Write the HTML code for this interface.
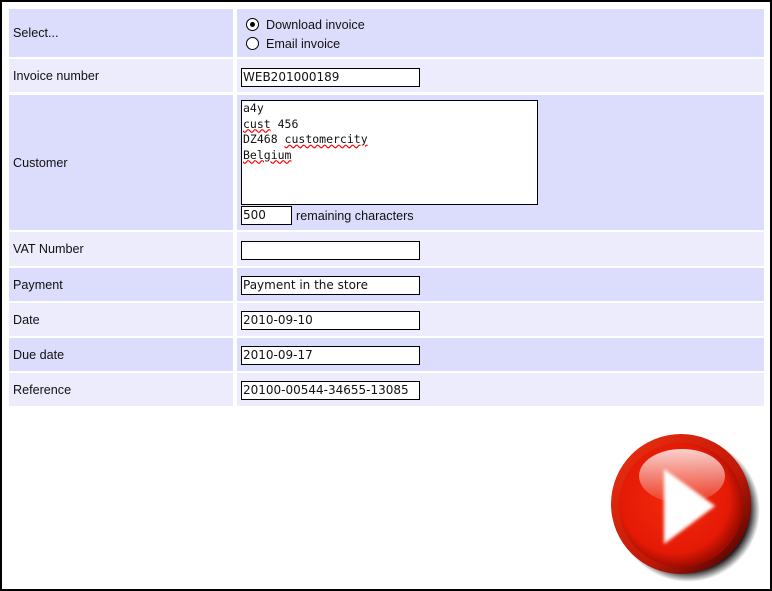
<!DOCTYPE html>
<html><head><meta charset="utf-8"><style>
html,body{margin:0;padding:0;background:#fff}
body{width:768px;height:587px;border:2px solid #000;position:relative;overflow:hidden;font-family:"Liberation Sans",sans-serif;font-size:12.6px;color:#111}
.r{position:absolute;left:7px;width:755px}
.l,.v{position:absolute;top:0;bottom:0}
.l{left:0;width:224px}
.v{left:228px;right:0}
.d .l,.d .v{background:#dcdcfc}
.e .l,.e .v{background:#ececfc}
.lt{position:absolute;left:4px;top:50%;transform:translateY(-50%)}
.in{position:absolute;left:4px;width:176px;height:17px;border:1px solid #000;background:#fff;font-family:"DejaVu Sans",sans-serif;font-size:12px;line-height:17px;padding-left:1px;box-sizing:content-box;white-space:nowrap;overflow:hidden}
.rad{position:absolute;left:9px;width:11px;height:11px;border:1px solid #000;border-radius:50%;background:#fff}
</style></head><body>
<div class="r d" style="top:7px;height:48px"><div class="l"><span class="lt">Select...</span></div><div class="v">
<div class="rad" style="top:9px"><div style="position:absolute;left:3px;top:3px;width:5px;height:5px;border-radius:50%;background:#000"></div></div>
<span style="position:absolute;left:29px;top:9px">Download invoice</span>
<div class="rad" style="top:28px"></div>
<span style="position:absolute;left:29px;top:28px">Email invoice</span></div></div>
<div class="r e" style="top:57px;height:33px"><div class="l"><span class="lt">Invoice number</span></div><div class="v"><div class="in" style="top:9px">WEB201000189</div></div></div>
<div class="r d" style="top:93px;height:135px"><div class="l"><span class="lt">Customer</span></div><div class="v">
<div style="position:absolute;left:4px;top:5px;width:297px;height:105px;border:1px solid #000;background:#fff;font-family:'DejaVu Sans Mono',monospace;font-size:11.5px;line-height:15.5px;padding-left:1px;box-sizing:border-box;white-space:pre">a4y
<span style="text-decoration:underline wavy red">cust</span> 456
DZ468 <span style="text-decoration:underline wavy red">customercity</span>
<span style="text-decoration:underline wavy red">Belgium</span></div>
<div class="in" style="top:111px;width:48px">500</div>
<span style="position:absolute;left:59px;top:114px">remaining characters</span></div></div>
<div class="r e" style="top:230px;height:34px"><div class="l"><span class="lt">VAT Number</span></div><div class="v"><div class="in" style="top:9px"></div></div></div>
<div class="r d" style="top:266px;height:33px"><div class="l"><span class="lt">Payment</span></div><div class="v"><div class="in" style="top:8px">Payment in the store</div></div></div>
<div class="r e" style="top:301px;height:33px"><div class="l"><span class="lt">Date</span></div><div class="v"><div class="in" style="top:8px">2010-09-10</div></div></div>
<div class="r d" style="top:336px;height:33px"><div class="l"><span class="lt">Due date</span></div><div class="v"><div class="in" style="top:8px">2010-09-17</div></div></div>
<div class="r e" style="top:371px;height:33px"><div class="l"><span class="lt">Reference</span></div><div class="v"><div class="in" style="top:8px">20100-00544-34655-13085</div></div></div>
<svg style="position:absolute;left:596px;top:422px" width="168" height="162" viewBox="0 0 168 162">
<defs>
<radialGradient id="sh" cx="0.5" cy="0.5" r="0.5"><stop offset="0.85" stop-color="#000" stop-opacity="0.9"/><stop offset="1" stop-color="#000" stop-opacity="0"/></radialGradient>
<linearGradient id="rim" x1="0" y1="0" x2="1" y2="1"><stop offset="0" stop-color="#f03010"/><stop offset="0.6" stop-color="#c01808"/><stop offset="1" stop-color="#300000"/></linearGradient>
<radialGradient id="bd" cx="0.45" cy="0.45" r="0.55"><stop offset="0" stop-color="#f42a0a"/><stop offset="0.8" stop-color="#e41a06"/><stop offset="1" stop-color="#a00c00"/></radialGradient>
<linearGradient id="gl" x1="0" y1="0" x2="0" y2="1"><stop offset="0" stop-color="#fff" stop-opacity="0.8"/><stop offset="1" stop-color="#fff" stop-opacity="0.1"/></linearGradient>
<filter id="bl"><feGaussianBlur stdDeviation="1.5"/></filter>
</defs>
<circle cx="90" cy="86" r="72" fill="url(#sh)"/>
<circle cx="83" cy="80" r="70" fill="url(#rim)"/>
<circle cx="83" cy="81" r="62" fill="url(#bd)"/>
<ellipse cx="84" cy="52" rx="43" ry="27" fill="url(#gl)"/>
<path d="M66 45 L117 82 L66 120 Z" fill="#fff" filter="url(#bl)"/>
</svg>
</body></html>
